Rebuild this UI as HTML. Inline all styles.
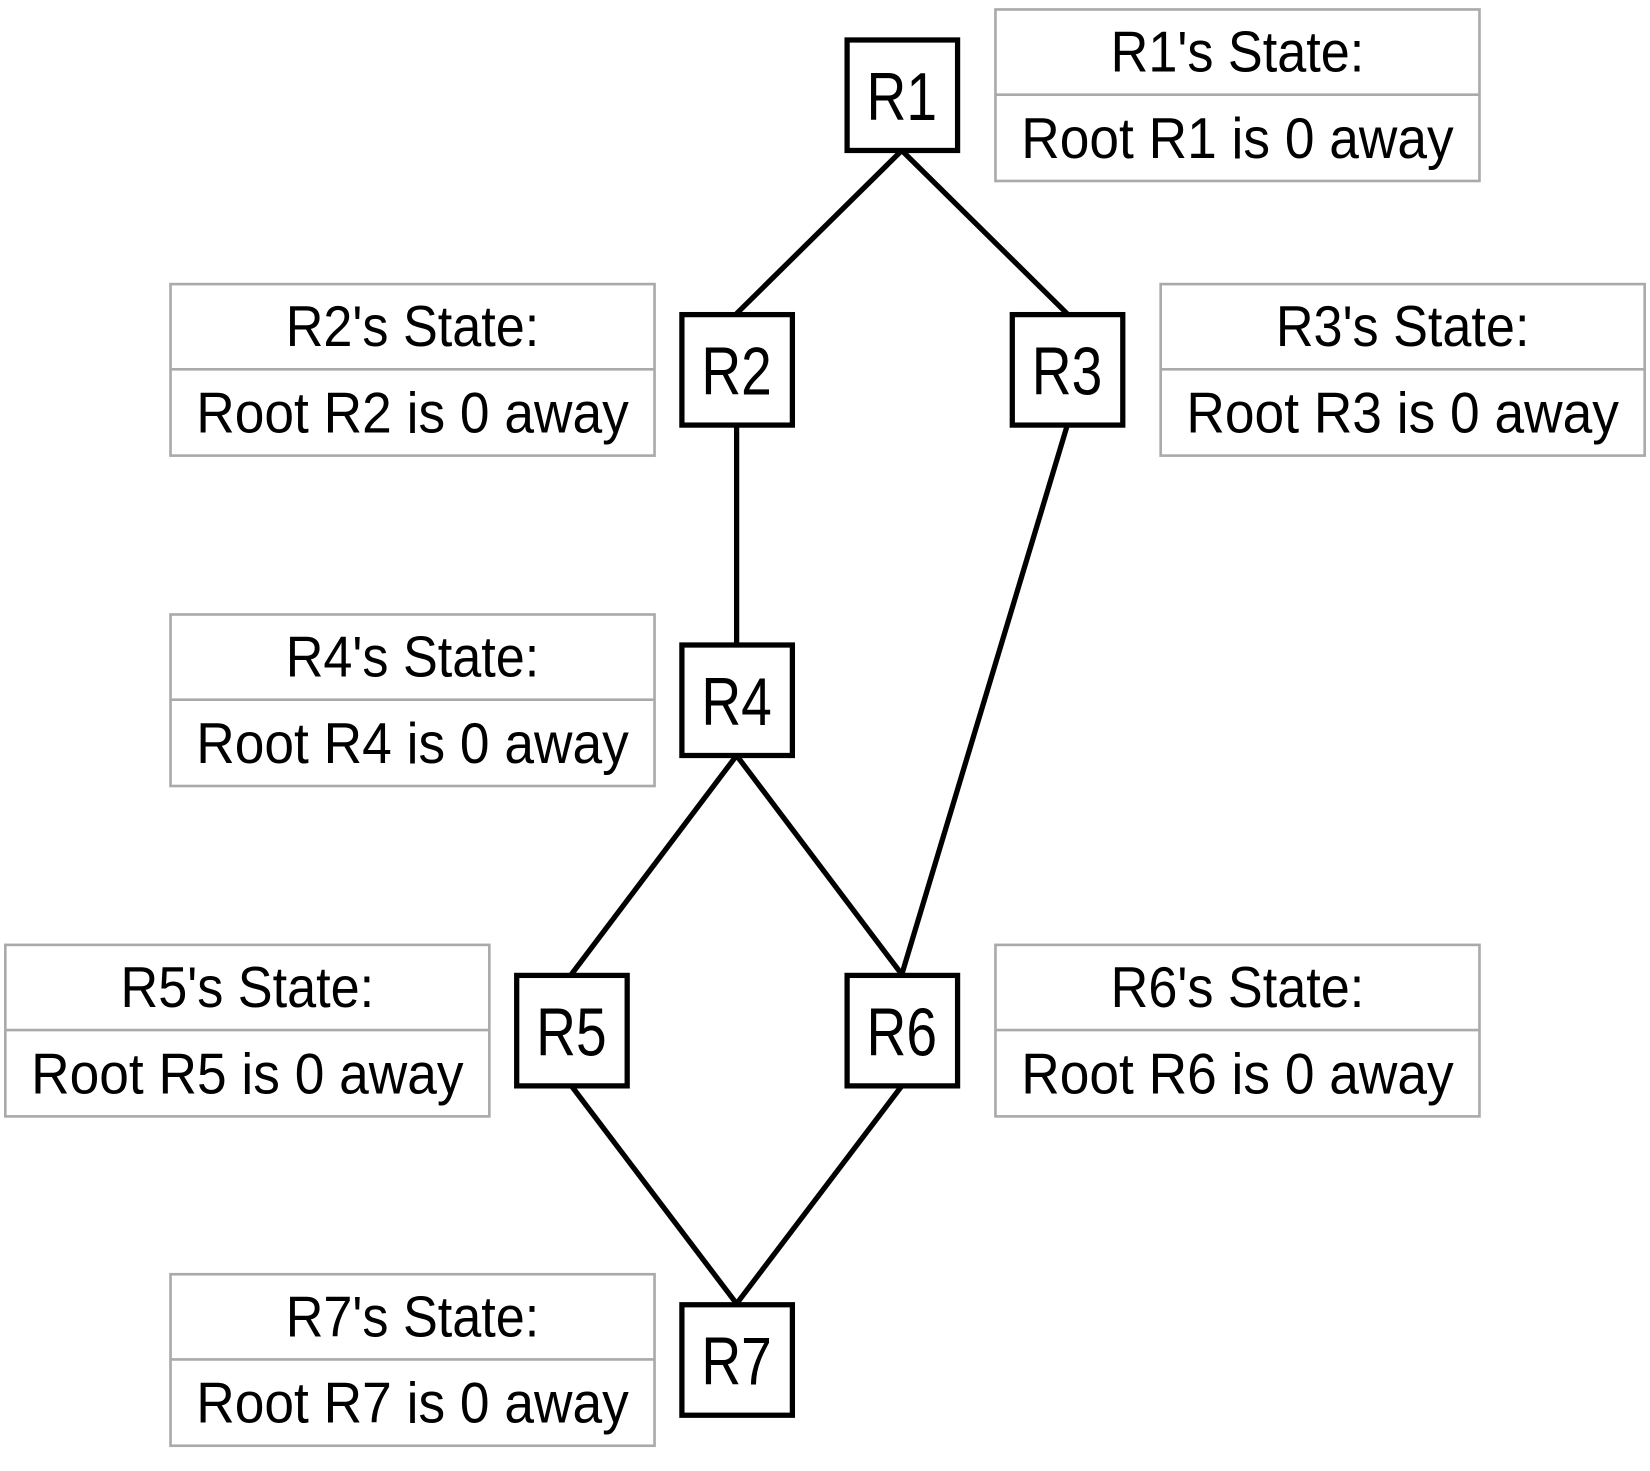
<!DOCTYPE html>
<html><head><style>html,body{margin:0;padding:0;background:#fff}svg{display:block}</style></head>
<body>
<svg width="1650" height="1471" viewBox="0 0 1568 1398" xmlns="http://www.w3.org/2000/svg" font-family="Liberation Sans, sans-serif">
<g stroke="#000" stroke-width="5" fill="none">
<line x1="857" y1="143" x2="700" y2="298"/>
<line x1="857" y1="143" x2="1014" y2="298"/>
<line x1="700" y1="405" x2="700" y2="612"/>
<line x1="1014" y1="405" x2="857" y2="926"/>
<line x1="700" y1="718" x2="543" y2="926"/>
<line x1="700" y1="718" x2="857" y2="926"/>
<line x1="543" y1="1032" x2="700" y2="1239"/>
<line x1="857" y1="1032" x2="700" y2="1239"/>
</g>
<g stroke="#000" stroke-width="5" fill="#fff">
<rect x="805" y="38" width="105" height="105"/>
<rect x="648" y="299" width="105" height="105"/>
<rect x="962" y="299" width="105" height="105"/>
<rect x="648" y="613" width="105" height="105"/>
<rect x="491" y="927" width="105" height="105"/>
<rect x="805" y="927" width="105" height="105"/>
<rect x="648" y="1240" width="105" height="105"/>
</g>
<g font-size="64" text-anchor="middle" fill="#000">
<text x="857" y="114" textLength="67" lengthAdjust="spacingAndGlyphs">R1</text>
<text x="700" y="375" textLength="67" lengthAdjust="spacingAndGlyphs">R2</text>
<text x="1014" y="375" textLength="67" lengthAdjust="spacingAndGlyphs">R3</text>
<text x="700" y="689" textLength="67" lengthAdjust="spacingAndGlyphs">R4</text>
<text x="543" y="1003" textLength="67" lengthAdjust="spacingAndGlyphs">R5</text>
<text x="857" y="1003" textLength="67" lengthAdjust="spacingAndGlyphs">R6</text>
<text x="700" y="1316" textLength="67" lengthAdjust="spacingAndGlyphs">R7</text>
</g>
<g stroke="#aaa" stroke-width="2.5" fill="#fff">
<rect x="946" y="9" width="460" height="163"/><line x1="946" y1="90" x2="1406" y2="90"/>
<rect x="162" y="270" width="460" height="163"/><line x1="162" y1="351" x2="622" y2="351"/>
<rect x="1103" y="270" width="460" height="163"/><line x1="1103" y1="351" x2="1563" y2="351"/>
<rect x="162" y="584" width="460" height="163"/><line x1="162" y1="665" x2="622" y2="665"/>
<rect x="5" y="898" width="460" height="163"/><line x1="5" y1="979" x2="465" y2="979"/>
<rect x="946" y="898" width="460" height="163"/><line x1="946" y1="979" x2="1406" y2="979"/>
<rect x="162" y="1211" width="460" height="163"/><line x1="162" y1="1292" x2="622" y2="1292"/>
</g>
<g font-size="55" text-anchor="middle" fill="#000">
<text x="1176" y="68" textLength="241" lengthAdjust="spacingAndGlyphs">R1's State:</text>
<text x="1176" y="150" textLength="411" lengthAdjust="spacingAndGlyphs">Root R1 is 0 away</text>
<text x="392" y="329" textLength="241" lengthAdjust="spacingAndGlyphs">R2's State:</text>
<text x="392" y="411" textLength="411" lengthAdjust="spacingAndGlyphs">Root R2 is 0 away</text>
<text x="1333" y="329" textLength="241" lengthAdjust="spacingAndGlyphs">R3's State:</text>
<text x="1333" y="411" textLength="411" lengthAdjust="spacingAndGlyphs">Root R3 is 0 away</text>
<text x="392" y="643" textLength="241" lengthAdjust="spacingAndGlyphs">R4's State:</text>
<text x="392" y="725" textLength="411" lengthAdjust="spacingAndGlyphs">Root R4 is 0 away</text>
<text x="235" y="957" textLength="241" lengthAdjust="spacingAndGlyphs">R5's State:</text>
<text x="235" y="1039" textLength="411" lengthAdjust="spacingAndGlyphs">Root R5 is 0 away</text>
<text x="1176" y="957" textLength="241" lengthAdjust="spacingAndGlyphs">R6's State:</text>
<text x="1176" y="1039" textLength="411" lengthAdjust="spacingAndGlyphs">Root R6 is 0 away</text>
<text x="392" y="1270" textLength="241" lengthAdjust="spacingAndGlyphs">R7's State:</text>
<text x="392" y="1352" textLength="411" lengthAdjust="spacingAndGlyphs">Root R7 is 0 away</text>
</g>
</svg>
</body></html>
